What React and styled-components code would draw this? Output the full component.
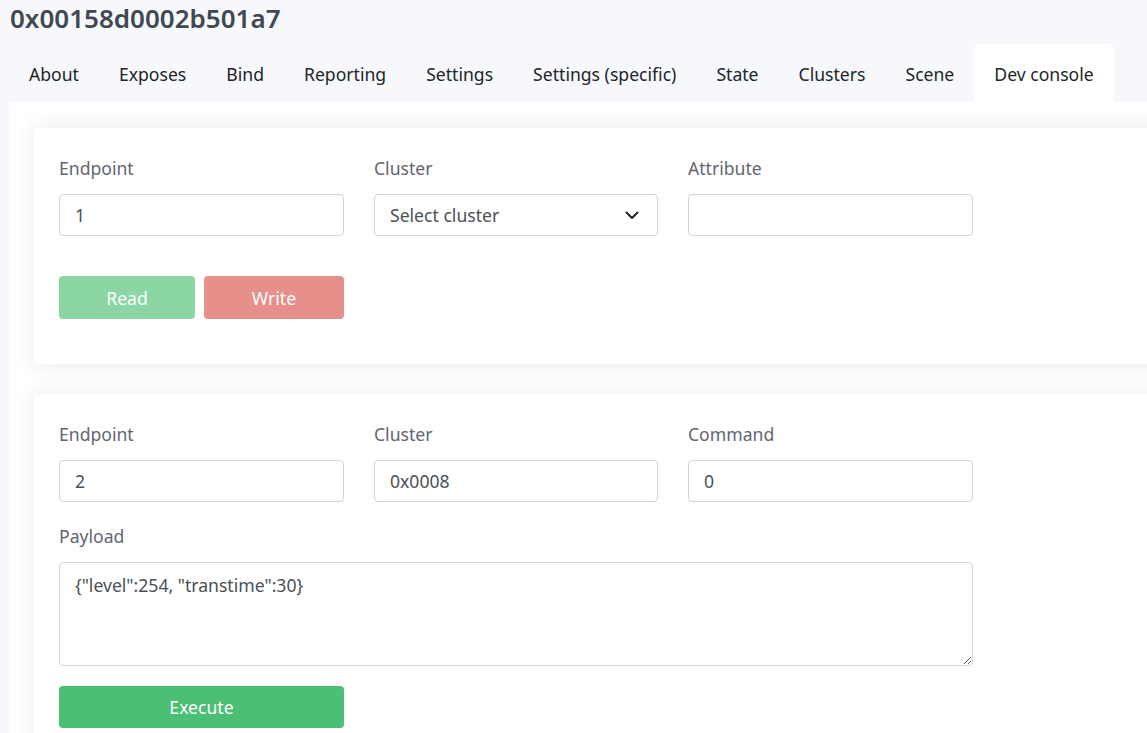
import React from 'react';
import styled, { createGlobalStyle } from 'styled-components';

const GlobalStyle = createGlobalStyle`
  html, body {
    margin: 0;
    padding: 0;
    overflow: hidden;
    background: #f7f8fb;
  }
  body {
    font-family: "Noto Sans", "Open Sans", sans-serif;
    font-size: 17.6px;
    color: #212529;
  }
  * { box-sizing: border-box; }
`;

const Page = styled.div`
  width: 1220px;
  padding-left: 9px;
`;

const Title = styled.h1`
  margin: 0;
  padding: 0 0 0 1px;
  height: 44px;
  font-size: 26px;
  line-height: 36px;
  font-weight: 600;
  color: #414852;
`;

const Tabs = styled.nav`
  display: flex;
  height: 58px;
`;

const Tab = styled.a`
  display: flex;
  align-items: center;
  padding: 1px 20px 0;
  border-radius: 5px 5px 0 0;
  color: #212529;
  text-decoration: none;
  background: ${p => (p.$active ? '#fff' : 'transparent')};
`;

const Pane = styled.div`
  background: #fff;
  padding: 26px 0 30px 25px;
  display: flex;
  flex-direction: column;
  gap: 30px;
`;

const Card = styled.div`
  background: #fff;
  border-radius: 5px;
  box-shadow: 0 0 22px rgba(40, 45, 70, 0.11);
  padding: 25px 25px ${p => p.$bottom || 25}px;
`;

const Row = styled.div`
  display: grid;
  grid-template-columns: 285px 284px 285px;
  column-gap: 30px;
`;

const Field = styled.div`
  display: flex;
  flex-direction: column;
`;

const Label = styled.label`
  color: #5f6670;
  line-height: 30px;
  margin-bottom: 11px;
`;

const Input = styled.input`
  height: 42px;
  width: 100%;
  border: 1px solid #ced4da;
  border-radius: 4px;
  padding: 0 15px;
  font: inherit;
  color: #495057;
  background: #fff;
`;

const SelectBox = styled.div`
  height: 42px;
  border: 1px solid #ced4da;
  border-radius: 4px;
  padding: 0 18px 0 15px;
  display: flex;
  align-items: center;
  justify-content: space-between;
  color: #495057;
`;

const TextArea = styled.textarea`
  display: block;
  width: 914px;
  height: 104px;
  border: 1px solid #ced4da;
  border-radius: 4px;
  padding: 9px 15px;
  font: inherit;
  line-height: 26px;
  color: #495057;
  resize: vertical;
`;

const Buttons = styled.div`
  display: flex;
  gap: 9px;
  margin-top: 40px;
`;

const Button = styled.button`
  height: ${p => p.$h || 43}px;
  width: ${p => p.$w}px;
  border: none;
  border-radius: 4px;
  background: ${p => p.$bg};
  color: #fff;
  font: inherit;
`;

const PayloadBlock = styled.div`
  margin-top: 19px;
`;

const ExecRow = styled.div`
  margin-top: 20px;
`;

const Chevron = () => (
  <svg width="14" height="10" viewBox="0 0 14 10" fill="none">
    <path d="M1.5 2.5 7 8l5.5-5.5" stroke="#222" strokeWidth="2" strokeLinecap="round" strokeLinejoin="round" />
  </svg>
);

const tabs = ['About', 'Exposes', 'Bind', 'Reporting', 'Settings', 'Settings (specific)', 'State', 'Clusters', 'Scene', 'Dev console'];

export default function App() {
  return (
    <Page>
      <GlobalStyle />
      <Title>0x00158d0002b501a7</Title>
      <Tabs>
        {tabs.map(t => (
          <Tab key={t} $active={t === 'Dev console'}>{t}</Tab>
        ))}
      </Tabs>
      <Pane>
        <Card $bottom={45}>
          <Row>
            <Field>
              <Label>Endpoint</Label>
              <Input defaultValue="1" />
            </Field>
            <Field>
              <Label>Cluster</Label>
              <SelectBox>
                <span>Select cluster</span>
                <Chevron />
              </SelectBox>
            </Field>
            <Field>
              <Label>Attribute</Label>
              <Input defaultValue="" />
            </Field>
          </Row>
          <Buttons>
            <Button $w={136} $bg="#8bd6a3">Read</Button>
            <Button $w={140} $bg="#e68f8b">Write</Button>
          </Buttons>
        </Card>
        <Card>
          <Row>
            <Field>
              <Label>Endpoint</Label>
              <Input defaultValue="2" />
            </Field>
            <Field>
              <Label>Cluster</Label>
              <Input defaultValue="0x0008" />
            </Field>
            <Field>
              <Label>Command</Label>
              <Input defaultValue="0" />
            </Field>
          </Row>
          <PayloadBlock>
            <Field>
              <Label>Payload</Label>
              <TextArea readOnly defaultValue={'{"level":254, "transtime":30}'} />
            </Field>
          </PayloadBlock>
          <ExecRow>
            <Button $w={285} $h={42} $bg="#4bbf73">Execute</Button>
          </ExecRow>
        </Card>
      </Pane>
    </Page>
  );
}
